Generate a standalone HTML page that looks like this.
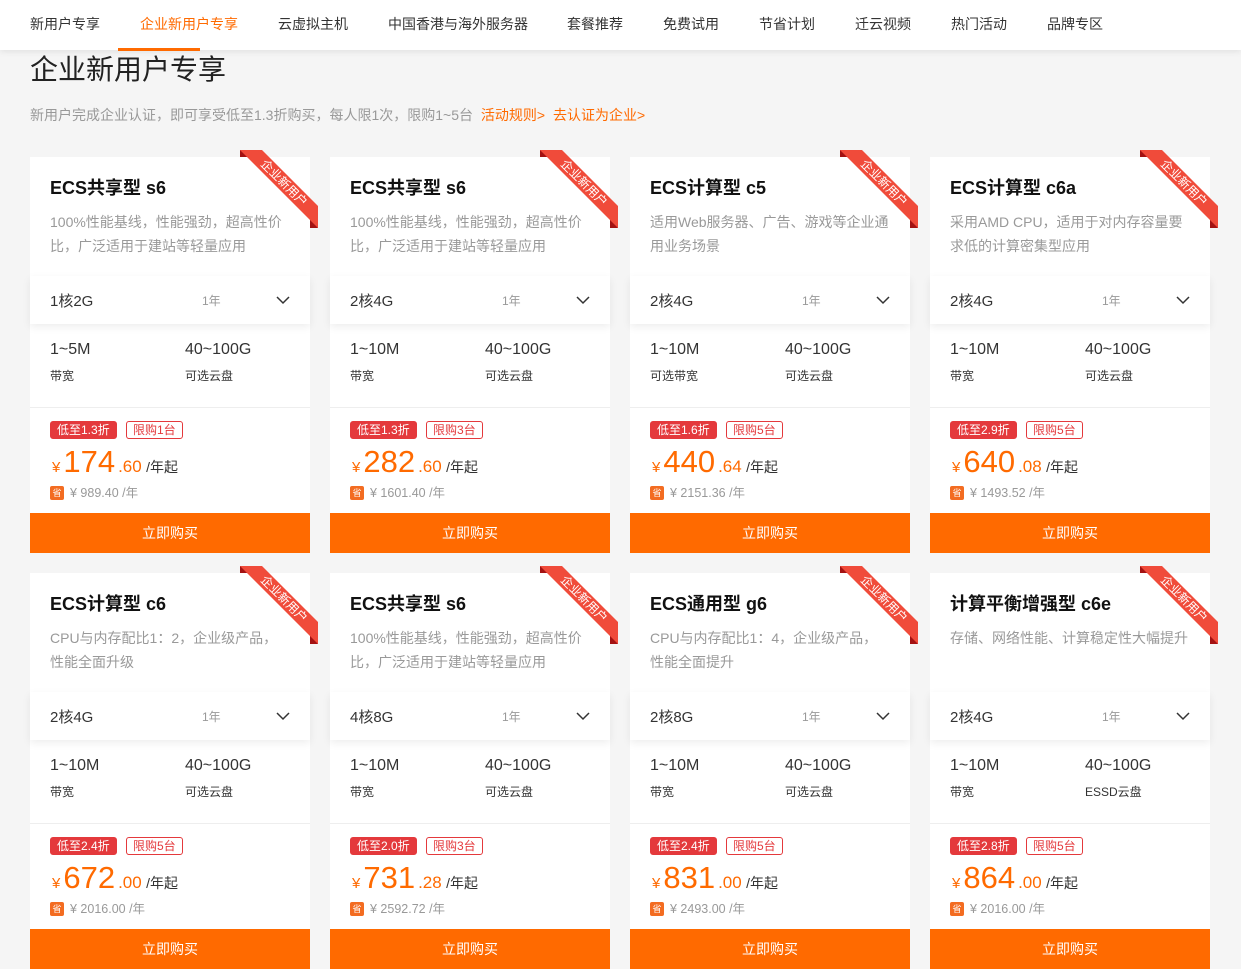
<!DOCTYPE html>
<html><head><meta charset="utf-8"><style>
*{margin:0;padding:0;box-sizing:border-box}
body{width:1241px;height:965px;overflow:hidden;background:#f5f5f5;font-family:"Liberation Sans","Noto Sans CJK SC",sans-serif;color:#333;position:relative}
.nav{position:absolute;left:0;top:0;width:1241px;height:50px;background:#fff;box-shadow:0 2px 6px rgba(0,0,0,.08);z-index:5}
.nav span{position:absolute;top:15px;font-size:14px;color:#333;line-height:18px}
.nav span.on{color:#ff6a00}
.nav i{position:absolute;left:118px;top:48px;width:82px;height:3px;background:#ff6a00}
h1{position:absolute;left:30px;top:52px;font-size:28px;font-weight:normal;color:#222;line-height:36px}
.sub{position:absolute;left:30px;top:106px;font-size:14px;color:#999;line-height:18px}
.sub b{font-weight:normal;color:#ff6a00;margin-left:4px}
.card{position:absolute;width:280px;height:396px;background:#fff}
.t{position:absolute;left:20px;top:20px;font-size:18px;font-weight:bold;color:#111;line-height:22px}
.d{position:absolute;left:20px;top:53px;width:238px;font-size:14px;color:#999;line-height:24px}
.sel{position:absolute;left:0;top:119px;width:280px;height:48px;background:#fff;box-shadow:0 3px 8px rgba(0,0,0,.07)}
.sel .a{position:absolute;left:20px;top:14px;font-size:15px;color:#333}
.sel .y{position:absolute;left:172px;top:16px;font-size:12px;color:#999}
.sel svg{position:absolute;left:246px;top:19px}
.s1{position:absolute;top:183px;font-size:16px;color:#333;line-height:20px}
.s2{position:absolute;top:211px;font-size:12px;color:#333;line-height:16px}
.hr{position:absolute;left:0;top:250px;width:280px;height:1px;background:#eee}
.tg{position:absolute;top:264px;height:18px;line-height:16px;font-size:12px;padding:0 6px;border-radius:3px}
.tg1{left:20px;background:#e4393c;color:#fff;border:1px solid #e4393c}
.tg2{left:96px;border:1px solid #e4393c;color:#e4393c}
.pr{position:absolute;left:20px;top:286px;color:#ff6a00;white-space:nowrap;line-height:38px}
.pr .c{font-size:15px;margin:0 3px 0 2px}.pr .n{font-size:31px}.pr .f{font-size:17px;margin-left:3px}.pr .u{font-size:14px;color:#333}
.sv{position:absolute;left:20px;top:329px;font-size:12.5px;color:#999;line-height:14px}
.sv i{display:inline-block;width:14px;height:14px;background:#f36c21;color:#fff;font-size:9px;font-style:normal;text-align:center;line-height:14px;border-radius:2px;margin-right:6px;vertical-align:top}
.btn{position:absolute;left:0;top:356px;width:280px;height:40px;background:#ff6a00;color:#fff;font-size:14px;text-align:center;line-height:40px}
.rb{position:absolute;left:208px;top:-7px;width:80px;height:80px;overflow:visible}
</style></head><body>
<div class="nav">
<span style="left:30px">新用户专享</span><span class="on" style="left:140px">企业新用户专享</span><span style="left:278px">云虚拟主机</span><span style="left:388px">中国香港与海外服务器</span><span style="left:567px">套餐推荐</span><span style="left:663px">免费试用</span><span style="left:759px">节省计划</span><span style="left:855px">迁云视频</span><span style="left:951px">热门活动</span><span style="left:1047px">品牌专区</span><i></i>
</div>
<h1>企业新用户专享</h1>
<div class="sub">新用户完成企业认证，即可享受低至1.3折购买，每人限1次，限购1~5台 <b>活动规则&gt;</b> <b>去认证为企业&gt;</b></div>

<div class="card" style="left:30px;top:157px"><div class="t">ECS共享型 s6</div><div class="d">100%性能基线，性能强劲，超高性价比，广泛适用于建站等轻量应用</div><div class="sel"><span class="a">1核2G</span><span class="y">1年</span><svg width="14" height="10"><path d="M1 2l6 6 6-6" fill="none" stroke="#333" stroke-width="1.5"/></svg></div><div class="s1" style="left:20px">1~5M</div><div class="s1" style="left:155px">40~100G</div><div class="s2" style="left:20px">带宽</div><div class="s2" style="left:155px">可选云盘</div><div class="hr"></div><span class="tg tg1">低至1.3折</span><span class="tg tg2">限购1台</span><div class="pr"><span class="c">¥</span><span class="n">174</span><span class="f">.60</span> <span class="u">/年起</span></div><div class="sv"><i>省</i>¥ 989.40 /年</div><div class="btn">立即购买</div><svg class="rb" viewBox="0 0 80 80"><path d="M2 0L14 7H2z M72 66L80 78H72z" fill="#a31212"/><path d="M2 0H24L80 56V78z" fill="#f04b3a"/><text transform="translate(46 33) rotate(45)" text-anchor="middle" dy="4" font-size="12" fill="#fff" font-family="Liberation Sans,Noto Sans CJK SC,sans-serif">企业新用户</text></svg></div>

<div class="card" style="left:330px;top:157px"><div class="t">ECS共享型 s6</div><div class="d">100%性能基线，性能强劲，超高性价比，广泛适用于建站等轻量应用</div><div class="sel"><span class="a">2核4G</span><span class="y">1年</span><svg width="14" height="10"><path d="M1 2l6 6 6-6" fill="none" stroke="#333" stroke-width="1.5"/></svg></div><div class="s1" style="left:20px">1~10M</div><div class="s1" style="left:155px">40~100G</div><div class="s2" style="left:20px">带宽</div><div class="s2" style="left:155px">可选云盘</div><div class="hr"></div><span class="tg tg1">低至1.3折</span><span class="tg tg2">限购3台</span><div class="pr"><span class="c">¥</span><span class="n">282</span><span class="f">.60</span> <span class="u">/年起</span></div><div class="sv"><i>省</i>¥ 1601.40 /年</div><div class="btn">立即购买</div><svg class="rb" viewBox="0 0 80 80"><path d="M2 0L14 7H2z M72 66L80 78H72z" fill="#a31212"/><path d="M2 0H24L80 56V78z" fill="#f04b3a"/><text transform="translate(46 33) rotate(45)" text-anchor="middle" dy="4" font-size="12" fill="#fff" font-family="Liberation Sans,Noto Sans CJK SC,sans-serif">企业新用户</text></svg></div>

<div class="card" style="left:630px;top:157px"><div class="t">ECS计算型 c5</div><div class="d" style="width:248px">适用Web服务器、广告、游戏等企业通用业务场景</div><div class="sel"><span class="a">2核4G</span><span class="y">1年</span><svg width="14" height="10"><path d="M1 2l6 6 6-6" fill="none" stroke="#333" stroke-width="1.5"/></svg></div><div class="s1" style="left:20px">1~10M</div><div class="s1" style="left:155px">40~100G</div><div class="s2" style="left:20px">可选带宽</div><div class="s2" style="left:155px">可选云盘</div><div class="hr"></div><span class="tg tg1">低至1.6折</span><span class="tg tg2">限购5台</span><div class="pr"><span class="c">¥</span><span class="n">440</span><span class="f">.64</span> <span class="u">/年起</span></div><div class="sv"><i>省</i>¥ 2151.36 /年</div><div class="btn">立即购买</div><svg class="rb" viewBox="0 0 80 80"><path d="M2 0L14 7H2z M72 66L80 78H72z" fill="#a31212"/><path d="M2 0H24L80 56V78z" fill="#f04b3a"/><text transform="translate(46 33) rotate(45)" text-anchor="middle" dy="4" font-size="12" fill="#fff" font-family="Liberation Sans,Noto Sans CJK SC,sans-serif">企业新用户</text></svg></div>

<div class="card" style="left:930px;top:157px"><div class="t">ECS计算型 c6a</div><div class="d">采用AMD CPU，适用于对内存容量要求低的计算密集型应用</div><div class="sel"><span class="a">2核4G</span><span class="y">1年</span><svg width="14" height="10"><path d="M1 2l6 6 6-6" fill="none" stroke="#333" stroke-width="1.5"/></svg></div><div class="s1" style="left:20px">1~10M</div><div class="s1" style="left:155px">40~100G</div><div class="s2" style="left:20px">带宽</div><div class="s2" style="left:155px">可选云盘</div><div class="hr"></div><span class="tg tg1">低至2.9折</span><span class="tg tg2">限购5台</span><div class="pr"><span class="c">¥</span><span class="n">640</span><span class="f">.08</span> <span class="u">/年起</span></div><div class="sv"><i>省</i>¥ 1493.52 /年</div><div class="btn">立即购买</div><svg class="rb" viewBox="0 0 80 80"><path d="M2 0L14 7H2z M72 66L80 78H72z" fill="#a31212"/><path d="M2 0H24L80 56V78z" fill="#f04b3a"/><text transform="translate(46 33) rotate(45)" text-anchor="middle" dy="4" font-size="12" fill="#fff" font-family="Liberation Sans,Noto Sans CJK SC,sans-serif">企业新用户</text></svg></div>

<div class="card" style="left:30px;top:573px"><div class="t">ECS计算型 c6</div><div class="d">CPU与内存配比1：2，企业级产品，性能全面升级</div><div class="sel"><span class="a">2核4G</span><span class="y">1年</span><svg width="14" height="10"><path d="M1 2l6 6 6-6" fill="none" stroke="#333" stroke-width="1.5"/></svg></div><div class="s1" style="left:20px">1~10M</div><div class="s1" style="left:155px">40~100G</div><div class="s2" style="left:20px">带宽</div><div class="s2" style="left:155px">可选云盘</div><div class="hr"></div><span class="tg tg1">低至2.4折</span><span class="tg tg2">限购5台</span><div class="pr"><span class="c">¥</span><span class="n">672</span><span class="f">.00</span> <span class="u">/年起</span></div><div class="sv"><i>省</i>¥ 2016.00 /年</div><div class="btn">立即购买</div><svg class="rb" viewBox="0 0 80 80"><path d="M2 0L14 7H2z M72 66L80 78H72z" fill="#a31212"/><path d="M2 0H24L80 56V78z" fill="#f04b3a"/><text transform="translate(46 33) rotate(45)" text-anchor="middle" dy="4" font-size="12" fill="#fff" font-family="Liberation Sans,Noto Sans CJK SC,sans-serif">企业新用户</text></svg></div>

<div class="card" style="left:330px;top:573px"><div class="t">ECS共享型 s6</div><div class="d">100%性能基线，性能强劲，超高性价比，广泛适用于建站等轻量应用</div><div class="sel"><span class="a">4核8G</span><span class="y">1年</span><svg width="14" height="10"><path d="M1 2l6 6 6-6" fill="none" stroke="#333" stroke-width="1.5"/></svg></div><div class="s1" style="left:20px">1~10M</div><div class="s1" style="left:155px">40~100G</div><div class="s2" style="left:20px">带宽</div><div class="s2" style="left:155px">可选云盘</div><div class="hr"></div><span class="tg tg1">低至2.0折</span><span class="tg tg2">限购3台</span><div class="pr"><span class="c">¥</span><span class="n">731</span><span class="f">.28</span> <span class="u">/年起</span></div><div class="sv"><i>省</i>¥ 2592.72 /年</div><div class="btn">立即购买</div><svg class="rb" viewBox="0 0 80 80"><path d="M2 0L14 7H2z M72 66L80 78H72z" fill="#a31212"/><path d="M2 0H24L80 56V78z" fill="#f04b3a"/><text transform="translate(46 33) rotate(45)" text-anchor="middle" dy="4" font-size="12" fill="#fff" font-family="Liberation Sans,Noto Sans CJK SC,sans-serif">企业新用户</text></svg></div>

<div class="card" style="left:630px;top:573px"><div class="t">ECS通用型 g6</div><div class="d">CPU与内存配比1：4，企业级产品，性能全面提升</div><div class="sel"><span class="a">2核8G</span><span class="y">1年</span><svg width="14" height="10"><path d="M1 2l6 6 6-6" fill="none" stroke="#333" stroke-width="1.5"/></svg></div><div class="s1" style="left:20px">1~10M</div><div class="s1" style="left:155px">40~100G</div><div class="s2" style="left:20px">带宽</div><div class="s2" style="left:155px">可选云盘</div><div class="hr"></div><span class="tg tg1">低至2.4折</span><span class="tg tg2">限购5台</span><div class="pr"><span class="c">¥</span><span class="n">831</span><span class="f">.00</span> <span class="u">/年起</span></div><div class="sv"><i>省</i>¥ 2493.00 /年</div><div class="btn">立即购买</div><svg class="rb" viewBox="0 0 80 80"><path d="M2 0L14 7H2z M72 66L80 78H72z" fill="#a31212"/><path d="M2 0H24L80 56V78z" fill="#f04b3a"/><text transform="translate(46 33) rotate(45)" text-anchor="middle" dy="4" font-size="12" fill="#fff" font-family="Liberation Sans,Noto Sans CJK SC,sans-serif">企业新用户</text></svg></div>

<div class="card" style="left:930px;top:573px"><div class="t">计算平衡增强型 c6e</div><div class="d" style="width:248px">存储、网络性能、计算稳定性大幅提升</div><div class="sel"><span class="a">2核4G</span><span class="y">1年</span><svg width="14" height="10"><path d="M1 2l6 6 6-6" fill="none" stroke="#333" stroke-width="1.5"/></svg></div><div class="s1" style="left:20px">1~10M</div><div class="s1" style="left:155px">40~100G</div><div class="s2" style="left:20px">带宽</div><div class="s2" style="left:155px">ESSD云盘</div><div class="hr"></div><span class="tg tg1">低至2.8折</span><span class="tg tg2">限购5台</span><div class="pr"><span class="c">¥</span><span class="n">864</span><span class="f">.00</span> <span class="u">/年起</span></div><div class="sv"><i>省</i>¥ 2016.00 /年</div><div class="btn">立即购买</div><svg class="rb" viewBox="0 0 80 80"><path d="M2 0L14 7H2z M72 66L80 78H72z" fill="#a31212"/><path d="M2 0H24L80 56V78z" fill="#f04b3a"/><text transform="translate(46 33) rotate(45)" text-anchor="middle" dy="4" font-size="12" fill="#fff" font-family="Liberation Sans,Noto Sans CJK SC,sans-serif">企业新用户</text></svg></div>
</body></html>
